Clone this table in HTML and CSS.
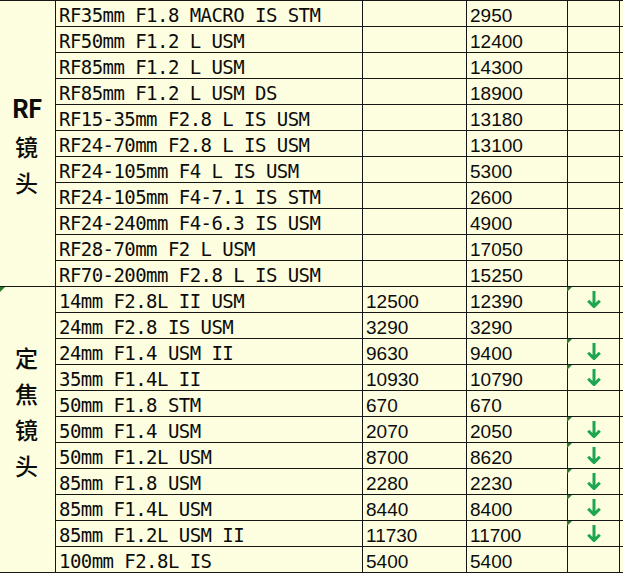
FILE: index.html
```html
<!DOCTYPE html>
<html lang="zh">
<head>
<meta charset="utf-8">
<title>佳能镜头价格</title>
<link rel="stylesheet" href="styles.css">
</head>
<body>
<div class="sheet">
  <div class="cell group group-rf"><span class="rf">RF</span><span class="cn">镜</span><span class="cn">头</span></div>

  <div class="cell name">RF35mm F1.8 MACRO IS STM</div><div class="cell num"></div><div class="cell num">2950</div><div class="cell mark"></div><div class="cell edge"></div>
  <div class="cell name">RF50mm F1.2 L USM</div><div class="cell num"></div><div class="cell num">12400</div><div class="cell mark"></div><div class="cell edge"></div>
  <div class="cell name">RF85mm F1.2 L USM</div><div class="cell num"></div><div class="cell num">14300</div><div class="cell mark"></div><div class="cell edge"></div>
  <div class="cell name">RF85mm F1.2 L USM DS</div><div class="cell num"></div><div class="cell num">18900</div><div class="cell mark"></div><div class="cell edge"></div>
  <div class="cell name">RF15-35mm F2.8 L IS USM</div><div class="cell num"></div><div class="cell num">13180</div><div class="cell mark"></div><div class="cell edge"></div>
  <div class="cell name">RF24-70mm F2.8 L IS USM</div><div class="cell num"></div><div class="cell num">13100</div><div class="cell mark"></div><div class="cell edge"></div>
  <div class="cell name">RF24-105mm F4 L IS USM</div><div class="cell num"></div><div class="cell num">5300</div><div class="cell mark"></div><div class="cell edge"></div>
  <div class="cell name">RF24-105mm F4-7.1 IS STM</div><div class="cell num"></div><div class="cell num">2600</div><div class="cell mark"></div><div class="cell edge"></div>
  <div class="cell name">RF24-240mm F4-6.3 IS USM</div><div class="cell num"></div><div class="cell num">4900</div><div class="cell mark"></div><div class="cell edge"></div>
  <div class="cell name">RF28-70mm F2 L USM</div><div class="cell num"></div><div class="cell num">17050</div><div class="cell mark"></div><div class="cell edge"></div>
  <div class="cell name">RF70-200mm F2.8 L IS USM</div><div class="cell num"></div><div class="cell num">15250</div><div class="cell mark"></div><div class="cell edge"></div>

  <div class="cell group group-prime flag"><span class="cn">定</span><span class="cn">焦</span><span class="cn">镜</span><span class="cn">头</span></div>

  <div class="cell name">14mm F2.8L II USM</div><div class="cell num">12500</div><div class="cell num">12390</div><div class="cell mark flag"><svg class="down" viewBox="0 0 14 17" width="14" height="17"><path d="M7 0V15.5M1.2 9.8L7 15.6L12.8 9.8"/></svg></div><div class="cell edge"></div>
  <div class="cell name">24mm F2.8 IS USM</div><div class="cell num">3290</div><div class="cell num">3290</div><div class="cell mark"></div><div class="cell edge"></div>
  <div class="cell name">24mm F1.4 USM II</div><div class="cell num">9630</div><div class="cell num">9400</div><div class="cell mark flag"><svg class="down" viewBox="0 0 14 17" width="14" height="17"><path d="M7 0V15.5M1.2 9.8L7 15.6L12.8 9.8"/></svg></div><div class="cell edge"></div>
  <div class="cell name">35mm F1.4L II</div><div class="cell num">10930</div><div class="cell num">10790</div><div class="cell mark flag"><svg class="down" viewBox="0 0 14 17" width="14" height="17"><path d="M7 0V15.5M1.2 9.8L7 15.6L12.8 9.8"/></svg></div><div class="cell edge"></div>
  <div class="cell name">50mm F1.8 STM</div><div class="cell num">670</div><div class="cell num">670</div><div class="cell mark"></div><div class="cell edge"></div>
  <div class="cell name">50mm F1.4 USM</div><div class="cell num">2070</div><div class="cell num">2050</div><div class="cell mark flag"><svg class="down" viewBox="0 0 14 17" width="14" height="17"><path d="M7 0V15.5M1.2 9.8L7 15.6L12.8 9.8"/></svg></div><div class="cell edge"></div>
  <div class="cell name">50mm F1.2L USM</div><div class="cell num">8700</div><div class="cell num">8620</div><div class="cell mark flag"><svg class="down" viewBox="0 0 14 17" width="14" height="17"><path d="M7 0V15.5M1.2 9.8L7 15.6L12.8 9.8"/></svg></div><div class="cell edge"></div>
  <div class="cell name">85mm F1.8 USM</div><div class="cell num">2280</div><div class="cell num">2230</div><div class="cell mark flag"><svg class="down" viewBox="0 0 14 17" width="14" height="17"><path d="M7 0V15.5M1.2 9.8L7 15.6L12.8 9.8"/></svg></div><div class="cell edge"></div>
  <div class="cell name">85mm F1.4L USM</div><div class="cell num">8440</div><div class="cell num">8400</div><div class="cell mark flag"><svg class="down" viewBox="0 0 14 17" width="14" height="17"><path d="M7 0V15.5M1.2 9.8L7 15.6L12.8 9.8"/></svg></div><div class="cell edge"></div>
  <div class="cell name">85mm F1.2L USM II</div><div class="cell num">11730</div><div class="cell num">11700</div><div class="cell mark flag"><svg class="down" viewBox="0 0 14 17" width="14" height="17"><path d="M7 0V15.5M1.2 9.8L7 15.6L12.8 9.8"/></svg></div><div class="cell edge"></div>
  <div class="cell name">100mm F2.8L IS</div><div class="cell num">5400</div><div class="cell num">5400</div><div class="cell mark"></div><div class="cell edge"></div>
</div>
</body>
</html>
```

FILE: styles.css
```css
html, body {
  margin: 0;
  padding: 0;
  background: #fdfddf;
  overflow: hidden;
}

.sheet {
  display: grid;
  grid-template-columns: 56px 307px 104px 101px 52px 1fr;
  grid-auto-rows: 26px;
  border-top: 1px solid #161616;
  width: 623px;
  color: #0c0c0c;
}

.cell {
  box-sizing: border-box;
  border-right: 1px solid #161616;
  border-bottom: 1px solid #161616;
  position: relative;
  display: flex;
  align-items: flex-end;
  min-width: 0;
  overflow: visible;
  white-space: pre;
}

.edge {
  border-right: none;
}

.name {
  font-family: "DejaVu Sans Mono", "Liberation Mono", monospace;
  font-size: 19px;
  line-height: 21px;
  letter-spacing: -0.55px;
  padding-left: 3px;
  padding-bottom: 0;
}

.num {
  font-family: "Liberation Sans", Arial, sans-serif;
  font-size: 19px;
  line-height: 21px;
  padding-left: 3px;
}

.mark {
  align-items: center;
  justify-content: center;
}

.down {
  display: block;
  fill: none;
  stroke: #1da650;
  stroke-width: 3;
  stroke-linejoin: miter;
}

.group {
  grid-row: span 11;
  flex-direction: column;
  align-items: center;
  justify-content: flex-start;
  font-family: "Noto Sans CJK SC", "Noto Sans", sans-serif;
}

.group-rf {
  padding-top: 88px;
  padding-right: 2px;
}

.group-prime {
  padding-top: 52px;
  padding-right: 2px;
}

.rf {
  font-weight: 700;
  font-size: 25px;
  line-height: 36px;
  letter-spacing: -1px;
  margin-bottom: 3px;
}

.cn {
  font-size: 23px;
  font-weight: 500;
  line-height: 36px;
}

.flag::before {
  content: "";
  position: absolute;
  top: 0;
  left: -1px;
  width: 0;
  height: 0;
  border-top: 5px solid #2b7a2b;
  border-right: 5px solid transparent;
}

.group.flag::before {
  left: 0;
}
```
